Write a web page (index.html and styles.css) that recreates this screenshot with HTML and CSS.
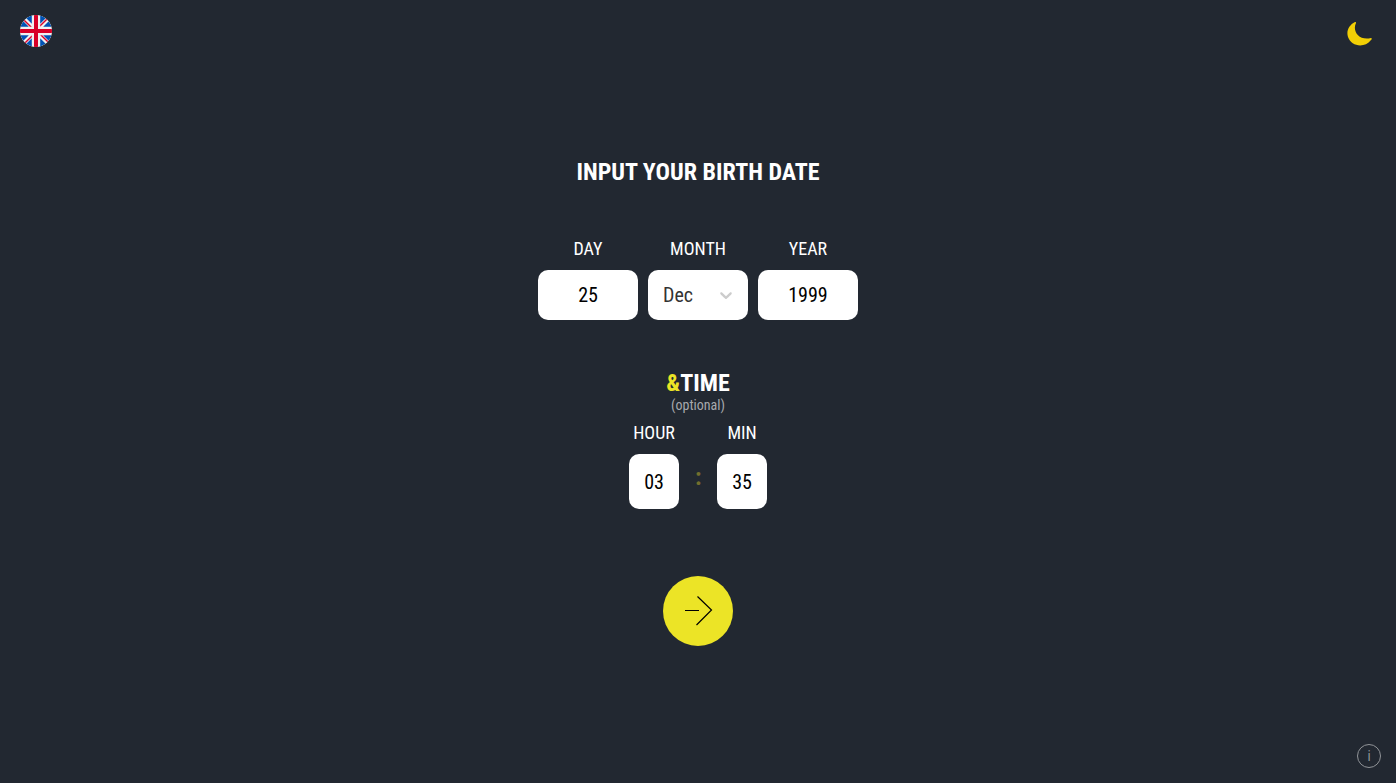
FILE: index.html
```html
<!DOCTYPE html>
<html lang="en">
<head>
<meta charset="utf-8">
<meta name="viewport" content="width=device-width, initial-scale=1">
<title>Birth date</title>
<link rel="stylesheet" href="styles.css">
</head>
<body>
<header class="topbar">
  <button class="icon-button" type="button" aria-label="Language">
    <svg class="flag" width="32" height="32" viewBox="0 0 32 32">
      <clipPath id="disc"><circle cx="16" cy="16" r="16"/></clipPath>
      <g clip-path="url(#disc)">
        <path fill="#f0f0f0" d="M0 0h32v32H0z"/>
        <path fill="#0052b4" d="M3.300 6.300A16 16 0 0 0 .6 11.800h8.200zM31.400 11.800a16 16 0 0 0-2.700-5.500l-5.500 5.500zM.6 20.200a16 16 0 0 0 2.700 5.500l5.500-5.500zM25.700 3.300A16 16 0 0 0 20.200.6v8.200zM6.300 28.700a16 16 0 0 0 5.500 2.700v-8.200zM11.800.6a16 16 0 0 0-5.500 2.700l5.500 5.500zM20.200 31.400a16 16 0 0 0 5.500-2.700l-5.500-5.500zM23.200 20.200l5.500 5.500a16 16 0 0 0 2.700-5.500z"/>
        <path fill="#d80027" d="M14 0h4v14h14v4H18v14h-4V18H0v-4h14z"/>
        <path fill="#d80027" d="M20.200 20.200l7.100 7.100 1-1-6.100-6.100zM11.800 20.200l-7.100 7.100 1 1 6.100-6.100zM11.800 11.800L4.700 4.700l-1 1 6.100 6.100zM20.200 11.800l7.100-7.100-1-1-6.100 6.100z"/>
      </g>
    </svg>
  </button>
  <button class="icon-button" type="button" aria-label="Dark theme">
    <svg width="32" height="32" viewBox="0 0 32 32">
      <path fill="#f2cf05" d="M11 7C5 10 2 16 4 22c3 9 16 12 23 3 1-1 1-2 0-2C15 26 8 16 12 8c0-1 0-1-1-1z"/>
    </svg>
  </button>
</header>
<main class="content">
  <form class="form">
    <h1 class="title">INPUT YOUR BIRTH DATE</h1>
    <div class="date">
      <div class="field">
        <label class="label" for="day">DAY</label>
        <input class="box" id="day" type="text" inputmode="numeric" value="25">
      </div>
      <div class="field">
        <label class="label" for="month">MONTH</label>
        <div class="picker">
          <select class="box select" id="month"><option>Dec</option></select>
          <svg class="chevron" width="20" height="20" viewBox="0 0 20 20"><path d="M4.516 7.548c.436-.446 1.043-.481 1.576 0L10 11.295l3.908-3.747c.533-.481 1.141-.446 1.574 0 .436.445.408 1.197 0 1.615-.406.418-4.695 4.502-4.695 4.502a1.095 1.095 0 0 1-1.576 0S4.924 9.581 4.516 9.163s-.436-1.170 0-1.615z"/></svg>
        </div>
      </div>
      <div class="field">
        <label class="label" for="year">YEAR</label>
        <input class="box" id="year" type="text" inputmode="numeric" value="1999">
      </div>
    </div>
    <h2 class="title time-title"><span class="accent">&amp;</span>TIME</h2>
    <p class="note">(optional)</p>
    <div class="time">
      <div class="field small">
        <label class="label" for="hour">HOUR</label>
        <input class="box tall" id="hour" type="text" inputmode="numeric" value="03">
      </div>
      <span class="colon">:</span>
      <div class="field small">
        <label class="label" for="min">MIN</label>
        <input class="box tall" id="min" type="text" inputmode="numeric" value="35">
      </div>
    </div>
    <button class="next" type="button" aria-label="Next">
      <svg width="70" height="70" viewBox="0 0 70 70" fill="none" stroke="#000">
        <path d="M22 34.500h14"/>
        <path d="M34.500 20.500l14 13.500-15 15" stroke-width="1.200"/>
      </svg>
    </button>
  </form>
</main>
<footer class="footer">
  <button class="info" type="button" aria-label="Info">i</button>
</footer>
</body>
</html>
```
FILE: styles.css
```css
* { box-sizing: border-box; }
body {
  margin: 0;
  min-height: 100vh;
  display: flex;
  flex-direction: column;
  background: #222831;
  color: #fff;
  font-family: "Roboto Condensed", Roboto, "Liberation Sans", sans-serif;
}
button, input, select { font: inherit; border: 0; padding: 0; margin: 0; }
button { cursor: pointer; }
.topbar {
  display: flex;
  justify-content: space-between;
  padding: 15px 20px;
}
.icon-button { display: flex; width: 32px; height: 32px; background: none; }
.icon-button svg { display: block; }
.content { flex: 1; padding-top: 96px; }
.form { display: flex; flex-direction: column; align-items: center; }
.title { margin: 0; font-size: 24px; line-height: 28px; font-weight: 700; }
.date { display: flex; gap: 10px; margin-top: 52px; }
.field { width: 100px; display: flex; flex-direction: column; align-items: center; }
.label { font-size: 18px; line-height: 22px; margin-bottom: 10px; }
.box {
  width: 100%;
  height: 50px;
  border-radius: 10px;
  background: #fff;
  color: #000;
  font-size: 20px;
  text-align: center;
}
.picker { position: relative; width: 100%; }
.select { display: block; appearance: none; padding-left: 15px; color: #333; text-align: left; }
.chevron { position: absolute; right: 12px; top: 15px; fill: #ccc; pointer-events: none; }
.time-title { margin-top: 49px; }
.accent { color: #ece426; }
.note { margin: 0; font-size: 14px; line-height: 16px; color: #a7a9ad; }
.time { display: flex; gap: 16px; margin-top: 9px; }
.small { width: 50px; }
.tall { height: 55px; }
.colon { width: 6px; padding-top: 38px; font-size: 24px; line-height: 34px; font-weight: 700; text-align: center; color: #736f2d; }
.next {
  display: flex;
  width: 70px;
  height: 70px;
  margin-top: 67px;
  border-radius: 50%;
  background: #ece426;
}
.footer { display: flex; justify-content: flex-end; padding: 15px; }
.info {
  width: 24px;
  height: 24px;
  border: 1px solid #919498;
  border-radius: 50%;
  background: none;
  color: #919498;
  font-size: 14px;
  line-height: 22px;
}
```
